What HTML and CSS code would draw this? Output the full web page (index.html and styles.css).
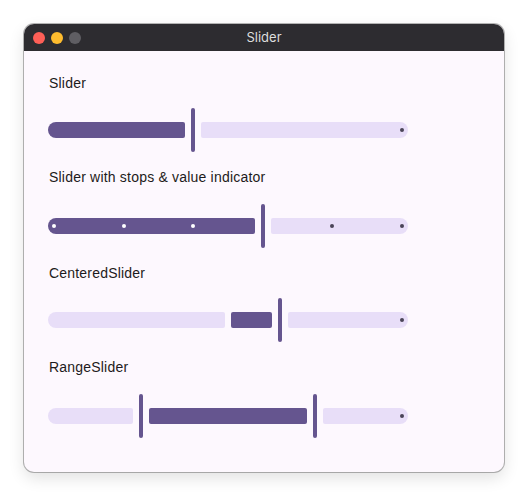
FILE: index.html
```html
<!DOCTYPE html>
<html>
<head>
<meta charset="utf-8">
<link rel="stylesheet" href="styles.css">
</head>
<body>
<div class="window">
  <div class="titlebar">
    <div class="lights">
      <span class="light red"></span>
      <span class="light yellow"></span>
      <span class="light gray"></span>
    </div>
    <div class="title">Slider</div>
  </div>
  <div class="content">
    <section class="section">
      <div class="label">Slider</div>
      <div class="slider">
        <div class="seg active round-l" style="width:137px"></div>
        <div class="thumb"></div>
        <div class="seg inactive round-r fill"><span class="dot end"></span></div>
      </div>
    </section>

    <section class="section even">
      <div class="label">Slider with stops &amp; value indicator</div>
      <div class="slider">
        <div class="seg active round-l" style="width:206.8px"></div>
        <div class="thumb"></div>
        <div class="seg inactive round-r fill"></div>
        <div class="stops">
          <span class="dot light-dot"></span>
          <span class="dot light-dot"></span>
          <span class="dot light-dot"></span>
          <span class="dot hidden"></span>
          <span class="dot"></span>
          <span class="dot"></span>
        </div>
      </div>
    </section>

    <section class="section">
      <div class="label">CenteredSlider</div>
      <div class="slider">
        <div class="seg inactive round-l" style="width:177px"></div>
        <div class="gap"></div>
        <div class="seg active" style="width:41px"></div>
        <div class="thumb"></div>
        <div class="seg inactive round-r fill"><span class="dot end"></span></div>
      </div>
    </section>

    <section class="section even">
      <div class="label">RangeSlider</div>
      <div class="slider">
        <div class="seg inactive round-l" style="width:85px"></div>
        <div class="thumb"></div>
        <div class="seg active" style="width:158px"></div>
        <div class="thumb"></div>
        <div class="seg inactive round-r fill"><span class="dot end"></span></div>
      </div>
    </section>
  </div>
</div>
</body>
</html>
```

FILE: styles.css
```css
html, body {
  margin: 0;
  padding: 0;
  background: #ffffff;
}

body {
  width: 528px;
  height: 496px;
  overflow: hidden;
}

.window {
  margin: 24px 0 0 24px;
  width: 480px;
  height: 448px;
  border-radius: 10px;
  overflow: hidden;
  background: #fdf8fe;
  box-shadow: 0 0 0 1px rgba(0, 0, 0, 0.28), 0 6px 16px rgba(0, 0, 0, 0.12);
  display: flex;
  flex-direction: column;
}

.titlebar {
  position: relative;
  height: 27px;
  flex: none;
  background: #2d2c30;
  display: flex;
  align-items: center;
  justify-content: center;
}

.lights {
  position: absolute;
  left: 9px;
  top: 8px;
  display: flex;
  gap: 6px;
}

.light {
  width: 12px;
  height: 12px;
  border-radius: 50%;
  display: block;
}

.red { background: #fe5f57; }
.yellow { background: #febc2e; }
.gray { background: #5f5e63; }

.title {
  font-family: "Inter", "Liberation Sans", sans-serif;
  font-size: 13px;
  color: #dedede;
  line-height: 16px;
  margin-top: -1px;
}

.content {
  padding: 22px 24px 0 24px;
  display: flex;
  flex-direction: column;
  gap: 13px;
}

.section {
  display: flex;
  flex-direction: column;
  gap: 13px;
}

.section.even {
  gap: 15px;
}

.label {
  font-family: "Liberation Sans", Arial, sans-serif;
  font-size: 14px;
  letter-spacing: 0.2px;
  line-height: 20px;
  color: #1d1b20;
  height: 20px;
  padding-left: 1px;
}

.slider {
  position: relative;
  width: 360px;
  height: 48px;
  display: flex;
  align-items: center;
  gap: 6px;
}

.seg {
  height: 16px;
  border-radius: 2px;
  flex: none;
  position: relative;
}

.seg.fill {
  flex: 1;
}

.active { background: #65558f; }
.inactive { background: #e8def8; }

.round-l {
  border-top-left-radius: 8px;
  border-bottom-left-radius: 8px;
}

.round-r {
  border-top-right-radius: 8px;
  border-bottom-right-radius: 8px;
}

.gap {
  width: 0;
  flex: none;
  margin-left: -6px;
}

.thumb {
  width: 4px;
  height: 44px;
  border-radius: 2px;
  background: #65558f;
  flex: none;
  position: relative;
  z-index: 2;
}

.dot {
  display: block;
  width: 4px;
  height: 4px;
  border-radius: 50%;
  background: #4a4458;
}

.dot.end {
  position: absolute;
  right: 4px;
  top: 6px;
}

.dot.light-dot {
  background: #ffffff;
}

.dot.hidden {
  background: transparent;
}

.stops {
  position: absolute;
  left: 4px;
  right: 4px;
  top: 22px;
  display: flex;
  justify-content: space-between;
  z-index: 1;
}
```
